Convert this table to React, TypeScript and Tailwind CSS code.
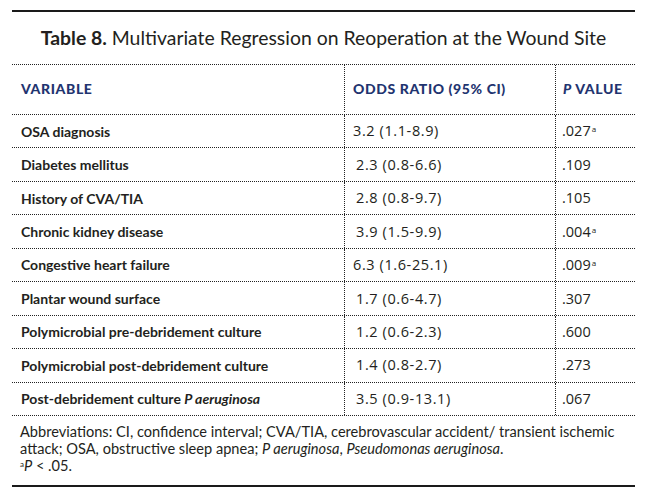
const rows: { name: React.ReactNode; ratio: string; indent?: boolean; p: string; sig?: boolean }[] = [
  { name: "OSA diagnosis", ratio: "3.2 (1.1-8.9)", p: ".027", sig: true },
  { name: "Diabetes mellitus", ratio: "2.3 (0.8-6.6)", indent: true, p: ".109" },
  { name: "History of CVA/TIA", ratio: "2.8 (0.8-9.7)", indent: true, p: ".105" },
  { name: "Chronic kidney disease", ratio: "3.9 (1.5-9.9)", indent: true, p: ".004", sig: true },
  { name: "Congestive heart failure", ratio: "6.3 (1.6-25.1)", p: ".009", sig: true },
  { name: "Plantar wound surface", ratio: "1.7 (0.6-4.7)", indent: true, p: ".307" },
  { name: "Polymicrobial pre-debridement culture", ratio: "1.2 (0.6-2.3)", indent: true, p: ".600" },
  { name: "Polymicrobial post-debridement culture", ratio: "1.4 (0.8-2.7)", indent: true, p: ".273" },
  {
    name: (
      <span>
        Post-debridement culture <i>P aeruginosa</i>
      </span>
    ),
    ratio: "3.5 (0.9-13.1)",
    indent: true,
    p: ".067",
  },
];

export default function App() {
  return (
    <div className="min-h-screen w-full bg-white pt-[10px] font-['Lato',sans-serif] text-[#231f20]">
      <div className="mx-[12px] w-[623px] border-t-2 border-[#1a1a1a]">
        <h1 className="pt-[13px] pb-[13px] text-center text-[19.4px] leading-[26px] text-[#231f20]">
          <span className="font-bold">Table 8.</span> Multivariate Regression on Reoperation at the Wound Site
        </h1>

        <div className="border-t border-dotted border-[#222]">
          <div className="grid h-[50px] grid-cols-[332px_211px_1fr] border-b border-dotted border-[#222] pb-[2px] text-[14px] font-black uppercase tracking-[0.6px] text-[#1f3470]">
            <div className="flex items-center pl-[9px]">Variable</div>
            <div className="flex items-center border-l border-dotted border-[#222] pl-[8px]">Odds Ratio (95% CI)</div>
            <div className="flex items-center border-l border-dotted border-[#222] pl-[7px]">
              <span>
                <i>P</i> Value
              </span>
            </div>
          </div>

          {rows.map((r, i) => (
            <div
              key={i}
              className="grid h-[33.45px] grid-cols-[332px_211px_1fr] border-b border-dotted border-[#222] text-[14px]"
            >
              <div className="flex items-center pl-[9px] font-bold">{r.name}</div>
              <div
                className={`flex items-center border-l border-dotted border-[#222] font-['Open_Sans',sans-serif] text-[14.5px] tracking-[0.6px] ${
                  r.indent ? "pl-[11px]" : "pl-[8px]"
                }`}
              >
                {r.ratio}
              </div>
              <div className="flex items-center border-l border-dotted border-[#222] pl-[6px] font-['Open_Sans',sans-serif] text-[14.5px]">
                <span>
                  {r.p}
                  {r.sig && <sup className="ml-[1px] text-[8px]">a</sup>}
                </span>
              </div>
            </div>
          ))}
        </div>

        <div className="pl-[8px] pt-[7px] pb-[12px] text-[14.6px]">
          <p className="leading-[17.5px]">
            Abbreviations: CI, confidence interval; CVA/TIA, cerebrovascular accident/ transient ischemic attack; OSA,
            obstructive sleep apnea; <i>P aeruginosa</i>, <i>Pseudomonas aeruginosa</i>.
          </p>
          <p className="leading-[15px]">
            <sup className="text-[8px]">a</sup>
            <i>P</i> &lt; .05.
          </p>
        </div>
      </div>
      <div className="mx-[12px] w-[623px] border-t-2 border-[#1a1a1a]" />
    </div>
  );
}
